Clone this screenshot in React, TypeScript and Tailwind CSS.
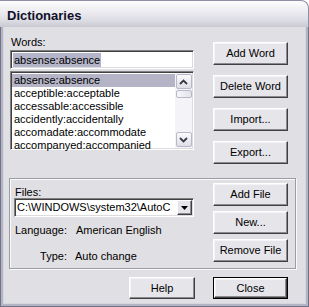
import React from "react";

const btnBase =
  "flex items-center justify-center bg-[#e6e5ea] border border-t-white border-l-white border-r-[#404040] border-b-[#404040] shadow-[inset_-1px_-1px_0_#8a8a90,inset_1px_1px_0_#f4f4f6] text-[11px] text-black leading-none";

function Btn({ children, cls = "" }: { children: React.ReactNode; cls?: string }) {
  return <div className={`${btnBase} w-[75px] h-[23px] ${cls}`}>{children}</div>;
}

function Chevron({ down = false }: { down?: boolean }) {
  return (
    <svg width="9" height="6" viewBox="0 0 9 6" className={down ? "rotate-180" : ""}>
      <path d="M1 5 L4.5 1.5 L8 5" fill="none" stroke="#3a3a48" strokeWidth="1.8" />
    </svg>
  );
}

const items = [
  "absense:absence",
  "acceptible:acceptable",
  "accessable:accessible",
  "accidently:accidentally",
  "accomadate:accommodate",
  "accompanyed:accompanied",
];

const sunken =
  "border border-t-[#808080] border-l-[#808080] border-b-white border-r-white shadow-[inset_1px_1px_0_#404040,inset_-1px_-1px_0_#dcdcdc]";

export default function App() {
  return (
    <div className="w-[309px] h-[307px] bg-white font-['Liberation_Sans',Arial,sans-serif] text-black overflow-hidden">
      <div className="w-[309px] h-[307px] flex flex-col">
        {/* title bar */}
        <div className="h-[27px] flex items-center pl-[7px] rounded-tr-[8px] border-t border-r border-[#8f8fa3] bg-[linear-gradient(to_bottom,#fdfdfe_0%,#ececf1_40%,#dcdce3_75%,#c9c9d4_100%)]">
          <span className="text-[13px] font-bold text-[#10102a] leading-none mt-[2px]">Dictionaries</span>
        </div>
        {/* body */}
        <div className="flex-1 flex flex-col bg-[#e0dfe3] border-l-[3px] border-r-[3px] border-b-[3px] border-[#b4b4c4] shadow-[inset_1px_0_0_#d6d6de,inset_-1px_-1px_0_#d6d6de] relative">
          <div className="absolute inset-[-3px] top-0 pointer-events-none border-l border-r border-b border-[#727286]" />
          {/* top row */}
          <div className="flex gap-[19px] ml-[7px] pt-[9px]">
            <div className="w-[184px] flex flex-col">
              <div className="h-[13px] text-[11px] leading-[13px] pl-[1px]">Words:</div>
              <div className={`mt-[1px] h-[19px] bg-white ${sunken} flex items-center pl-[2px]`}>
                <span className="bg-[#b5b5c9] text-[11px] leading-[14px] h-[14px] px-[1px]">absense:absence</span>
              </div>
              <div className={`mt-[2px] h-[79px] bg-white ${sunken} flex p-[1px]`}>
                <div className="flex-1 flex flex-col pt-[1px]">
                  {items.map((t, i) => (
                    <div
                      key={t}
                      className={`h-[13px] text-[11px] leading-[13px] pl-[2px] whitespace-nowrap ${i === 0 ? "bg-[#b4b4c6]" : ""}`}
                    >
                      {t}
                    </div>
                  ))}
                </div>
                {/* scrollbar */}
                <div className="w-[17px] bg-[#f4f4f8] flex flex-col items-center justify-between py-[1px]">
                  <div className="w-[16px] flex flex-col items-center">
                    <div className="w-[16px] h-[15px] rounded-[2px] border border-[#b8b8c8] bg-[linear-gradient(to_bottom,#fbfbfd,#dedee6)] flex items-center justify-center">
                      <Chevron />
                    </div>
                    <div className="w-[16px] h-[8px] mt-[1px] rounded-[2px] border border-[#b8b8c8] bg-[linear-gradient(to_right,#f6f6fa,#e2e2ea)]" />
                  </div>
                  <div className="w-[16px] h-[15px] rounded-[2px] border border-[#b8b8c8] bg-[linear-gradient(to_bottom,#fbfbfd,#dedee6)] flex items-center justify-center">
                    <Chevron down />
                  </div>
                </div>
              </div>
            </div>
            <div className="w-[75px] flex flex-col gap-[10px] pt-[6px]">
              <Btn>Add Word</Btn>
              <Btn>Delete Word</Btn>
              <Btn>Import...</Btn>
              <Btn>Export...</Btn>
            </div>
          </div>
          {/* group box */}
          <div className="mt-[14px] ml-[6px] w-[287px] h-[91px] border border-[#9c9ca6] shadow-[inset_1px_1px_0_#fafafa,1px_1px_0_#fafafa] flex gap-[19px] pl-[4px] pt-[4px]">
            <div className="w-[180px] flex flex-col">
              <div className="mt-[3px] h-[12px] text-[11px] leading-[12px] pl-[1px]">Files:</div>
              <div className={`h-[19px] bg-white ${sunken} flex items-center`}>
                <div className="flex-1 whitespace-nowrap text-[11px] leading-[13px] pl-[2px]">
                  C:\WINDOWS\system32\AutoC
                </div>
                <div className="w-[15px] h-[15px] mr-[1px] bg-[#e6e5ea] border border-t-white border-l-white border-r-[#404040] border-b-[#404040] shadow-[inset_-1px_-1px_0_#8a8a90] flex items-center justify-center">
                  <svg width="7" height="4" viewBox="0 0 7 4">
                    <path d="M0 0 H7 L3.5 4 Z" fill="#000" />
                  </svg>
                </div>
              </div>
              <div className="mt-[7px] flex h-[13px] text-[11px] leading-[13px]">
                <span className="w-[53px] text-right">Language:</span>
                <span className="ml-[9px]">American English</span>
              </div>
              <div className="mt-[13px] flex h-[13px] text-[11px] leading-[13px]">
                <span className="w-[53px] text-right">Type:</span>
                <span className="ml-[8px]">Auto change</span>
              </div>
            </div>
            <div className="w-[75px] flex flex-col gap-[5px]">
              <Btn>Add File</Btn>
              <Btn>New...</Btn>
              <Btn>Remove File</Btn>
            </div>
          </div>
          {/* bottom buttons */}
          <div className="mt-[8px] flex justify-end gap-[18px] pr-[18px]">
            <div className={`${btnBase} w-[66px] h-[22px]`}>Help</div>
            <div className="w-[75px] h-[22px] border border-black flex">
              <div className={`${btnBase} flex-1`}>Close</div>
            </div>
          </div>
        </div>
      </div>
    </div>
  );
}
